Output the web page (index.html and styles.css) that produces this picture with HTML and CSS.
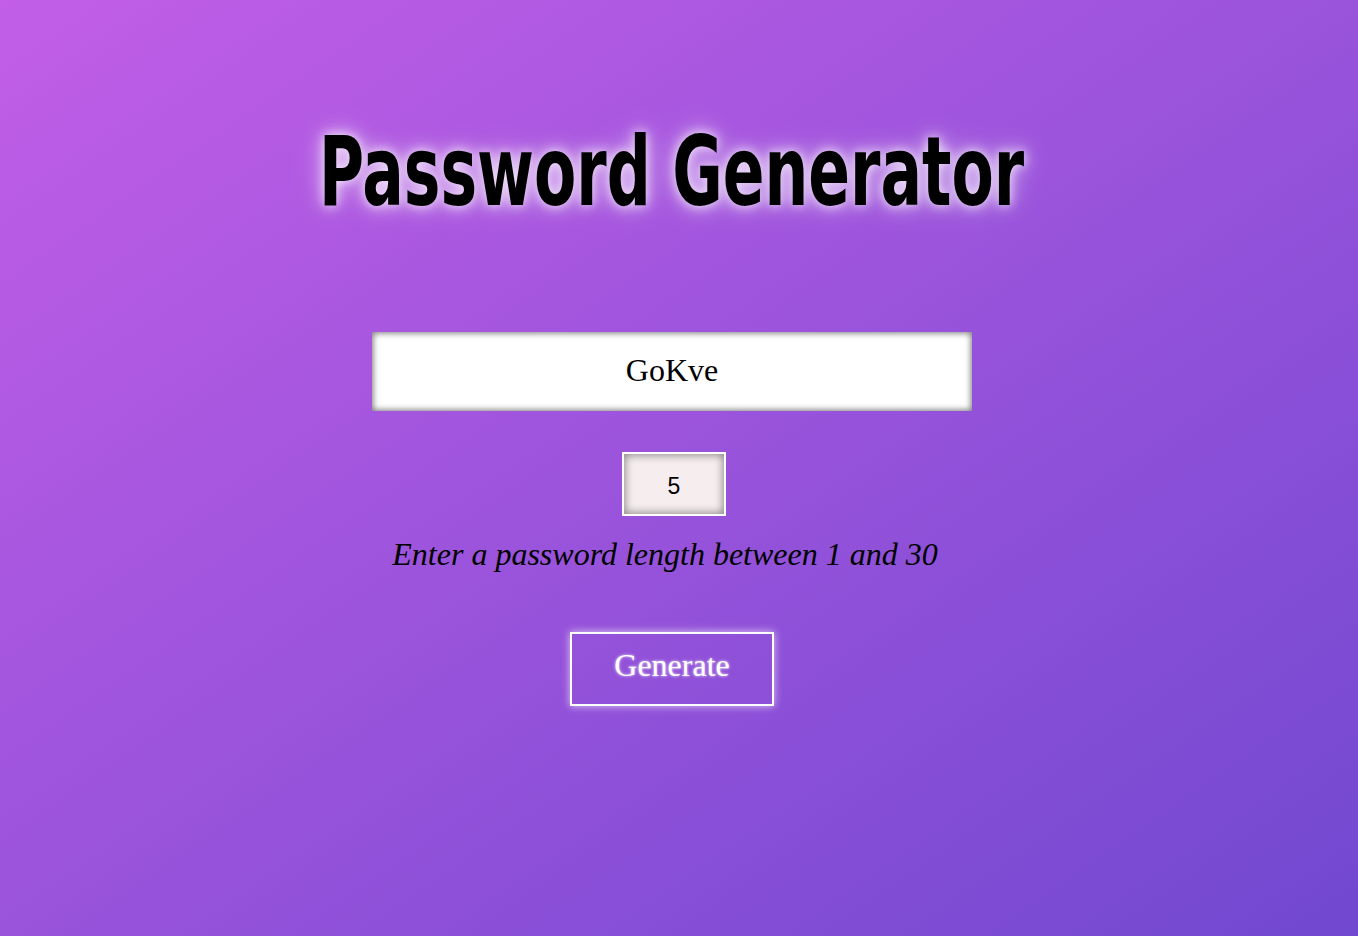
FILE: index.html
```html
<!DOCTYPE html>
<html>
<head>
<meta charset="utf-8">
<link rel="stylesheet" href="styles.css">
</head>
<body>
<main class="page">
  <h1 class="title"><span class="title-text">Password Generator</span></h1>
  <input class="output" type="text" value="GoKve" readonly>
  <input class="length" type="text" value="5">
  <p class="hint">Enter a password length between 1 and 30</p>
  <button class="generate">Generate</button>
</main>
</body>
</html>
```
FILE: styles.css
```css
html, body {
  margin: 0;
  height: 100%;
}
body {
  background: linear-gradient(to bottom right, #c25ee7, #7148d0);
  font-family: "Liberation Serif", "Times New Roman", serif;
}
.page {
  display: flex;
  flex-direction: column;
  align-items: center;
  padding-right: 14px;
}
.title {
  margin: 114px 0 0;
  font-family: "DejaVu Sans", sans-serif;
  font-stretch: condensed;
  font-weight: bold;
  font-size: 96px;
  line-height: 116px;
  color: #000;
  white-space: nowrap;
}
.title-text {
  display: inline-block;
  transform: scaleX(0.713);
  text-shadow: 0 0 12px rgba(255,255,255,0.75), 0 0 24px rgba(255,255,255,0.55), 0 0 40px rgba(255,255,255,0.3);
}
.output {
  margin-top: 102px;
  width: 600px;
  height: 79px;
  box-sizing: border-box;
  border: none;
  background: #fff;
  box-shadow: inset 0 0 6px 1px rgba(0,0,0,0.55);
  text-align: center;
  font-family: "Liberation Serif", serif;
  font-size: 32px;
  color: #000;
  outline: none;
  padding: 0 0 2px;
}
.length {
  margin: 41px 0 0 4px;
  width: 104px;
  height: 64px;
  box-sizing: border-box;
  border: 2px solid #fff;
  background: #f6eeee;
  box-shadow: inset 0 0 8px 1px rgba(0,0,0,0.45);
  text-align: center;
  font-family: "Liberation Sans", Arial, sans-serif;
  font-size: 23px;
  color: #000;
  outline: none;
  padding: 4px 0 0;
}
.hint {
  margin: 17px 0 0;
  padding-right: 14px;
  font-style: italic;
  font-size: 32px;
  line-height: 42px;
  color: #000;
}
.generate {
  margin-top: 57px;
  width: 204px;
  height: 74px;
  box-sizing: border-box;
  border: 2px solid #fff;
  background: transparent;
  box-shadow: 0 0 8px rgba(255,255,255,0.7);
  font-family: "Liberation Serif", serif;
  font-size: 32px;
  color: #fff;
  text-shadow: 0 0 3px rgba(255,255,255,0.9);
  cursor: pointer;
  padding: 0 0 7px;
}
```
